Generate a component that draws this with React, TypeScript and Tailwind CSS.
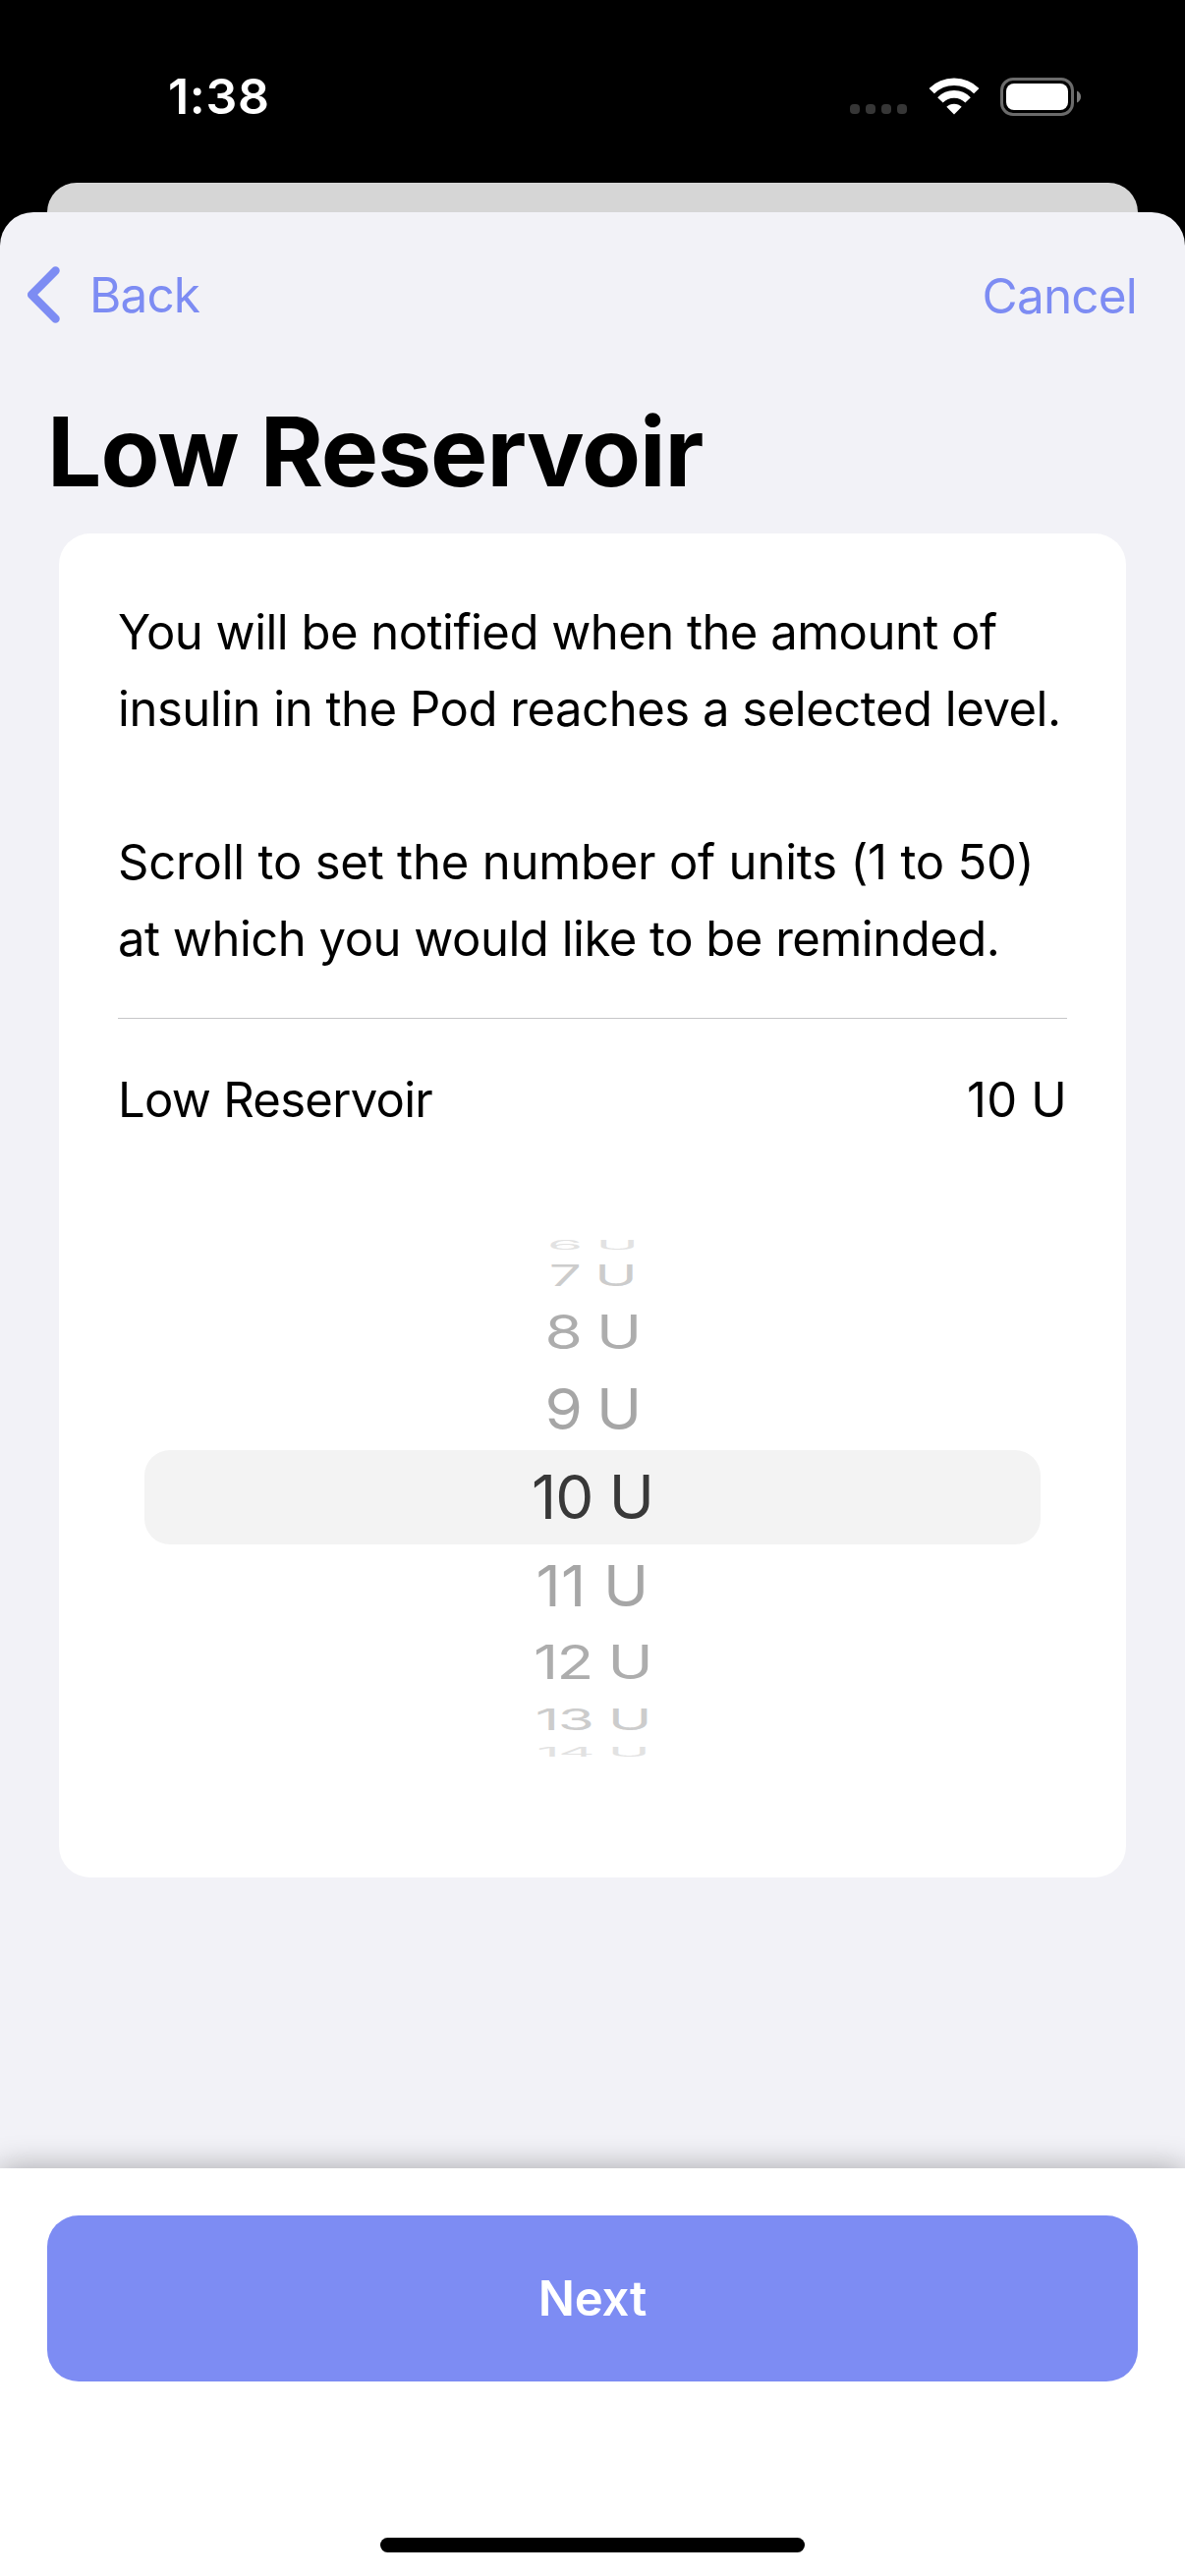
const pickerRows = [
  { label: "6 U", row: "h-[20px] text-[#e2e2e2]", text: "scale-x-[0.94] scale-y-[0.21] translate-y-px" },
  { label: "7 U", row: "h-[44px] text-[#cccccc]", text: "scale-x-[0.94] scale-y-[0.49]" },
  { label: "8 U", row: "h-[72px] text-[#adadad]", text: "scale-y-[0.765]" },
  { label: "9 U", row: "h-[84px] text-[#a6a6a6]", text: "scale-y-[0.94]" },
  { label: "10 U", row: "h-[96px] rounded-[26px] bg-[#f3f3f3] text-[#383838]", text: "tracking-[-1px]" },
  { label: "11 U", row: "h-[84px] text-[#a6a6a6]", text: "scale-y-[0.94] tracking-[0.2px]" },
  { label: "12 U", row: "h-[72px] text-[#adadad]", text: "scale-y-[0.765]" },
  { label: "13 U", row: "h-[44px] text-[#cccccc]", text: "scale-x-[0.97] scale-y-[0.49]" },
  { label: "14 U", row: "h-[20px] text-[#e2e2e2]", text: "scale-x-[0.93] scale-y-[0.21] translate-y-px" },
];

function StatusBar() {
  return (
    <header className="flex h-[186px] items-start justify-between pt-[58px] pr-[106px] pl-[171px] text-white">
      <span className="text-[50px] leading-[80px] font-semibold tracking-[0.7px]">1:38</span>
      <div className="flex h-[80px] items-center">
        <div className="mt-[26px] mr-[22px] flex gap-[6px]">
          {[0, 1, 2, 3].map((i) => (
            <span key={i} className="size-[10px] rounded-[4px] bg-[#363636]" />
          ))}
        </div>
        <svg width="52" height="38" viewBox="0 0 52 38" className="mr-[21px]">
          <g fill="none" stroke="#fff" strokeWidth="7.6">
            <path d="M3.2 13.6A32.3 32.3 0 0 1 48.8 13.6" />
            <path d="M11.9 22.9A19.6 19.6 0 0 1 40.1 22.9" />
          </g>
          <path d="M26 37.6 18.3 29.8a11 11 0 0 1 15.4 0Z" fill="#fff" />
        </svg>
        <svg width="82" height="39" viewBox="0 0 82 39">
          <rect x="1.5" y="1.5" width="72" height="36" rx="11.5" fill="none" stroke="#6b6b6b" strokeWidth="3" />
          <rect x="6" y="6" width="63" height="27" rx="8" fill="#fff" />
          <path d="M78 13.5c2.6 1 4 3.4 4 6s-1.4 5-4 6Z" fill="#7a7a7a" />
        </svg>
      </div>
    </header>
  );
}

function NavBar() {
  return (
    <nav className="flex h-[168px] items-center justify-between pr-[49px] pl-[26px] text-[49.5px] text-[#7d8cf3]">
      <button className="flex items-center tracking-[-0.87px]">
        <svg width="36" height="60" viewBox="0 0 36 60" className="mr-[29px]">
          <path d="M30.500 5.500 6.200 30 30.500 54.500" fill="none" stroke="currentColor" strokeWidth="8.500" strokeLinecap="round" strokeLinejoin="round" />
        </svg>
        <span className="pt-px">Back</span>
      </button>
      <button className="pt-[3px] tracking-[-0.82px]">Cancel</button>
    </nav>
  );
}

function ReservoirCard() {
  return (
    <section className="mx-[60px] h-[1368px] rounded-[32px] bg-white px-[60px] pt-[62px] text-[49px]">
      <p className="leading-[78px] whitespace-nowrap">
        <span className="tracking-[-0.52px]">You will be notified when the amount of</span>
        <br />
        <span className="tracking-[-0.47px]">insulin in the Pod reaches a selected level.</span>
      </p>
      <p className="mt-[78px] leading-[78px] whitespace-nowrap">
        <span className="tracking-[-0.2px]">Scroll to set the number of units (1 to 50)</span>
        <br />
        <span className="tracking-[-0.49px]">at which you would like to be reminded.</span>
      </p>
      <div className="mt-[41px] flex h-[165px] items-center justify-between border-t border-[#c6c6c8] pt-[2px]">
        <span className="tracking-[-0.72px]">Low Reservoir</span>
        <span className="tracking-[0.2px]">10 U</span>
      </div>
      <div className="mx-[27px] mt-[55px] text-[62px] leading-none tracking-[-1.6px]">
        {pickerRows.map((item) => (
          <div key={item.label} className={`flex items-center justify-center ${item.row}`}>
            <span className={item.text}>{item.label}</span>
          </div>
        ))}
      </div>
    </section>
  );
}

export default function App() {
  return (
    <div className="flex h-[2622px] w-[1206px] flex-col overflow-hidden bg-black font-['Inter',sans-serif] text-black">
      <StatusBar />
      <div className="mx-[48px] h-[30px] shrink-0 rounded-t-[30px] bg-[#d6d6d6]" />
      <main className="flex grow flex-col rounded-t-[34px] bg-[#f2f2f7]">
        <NavBar />
        <h1 className="mt-[16px] mb-[23px] pl-[48px] text-[98px] leading-[120px] font-bold tracking-[-1px]">
          Low Reservoir
        </h1>
        <ReservoirCard />
        <footer className="mt-auto flex h-[415px] flex-col items-center bg-white px-[48px] pt-[48px] shadow-[0_0_30px_rgba(0,0,0,0.33)]">
          <button className="h-[169px] w-full rounded-[32px] bg-[#7d8cf3] pt-px text-[49px] font-semibold tracking-[-0.2px] text-white">
            Next
          </button>
          <div className="mt-[159px] h-[15px] w-[432px] rounded-full bg-black" />
        </footer>
      </main>
    </div>
  );
}
